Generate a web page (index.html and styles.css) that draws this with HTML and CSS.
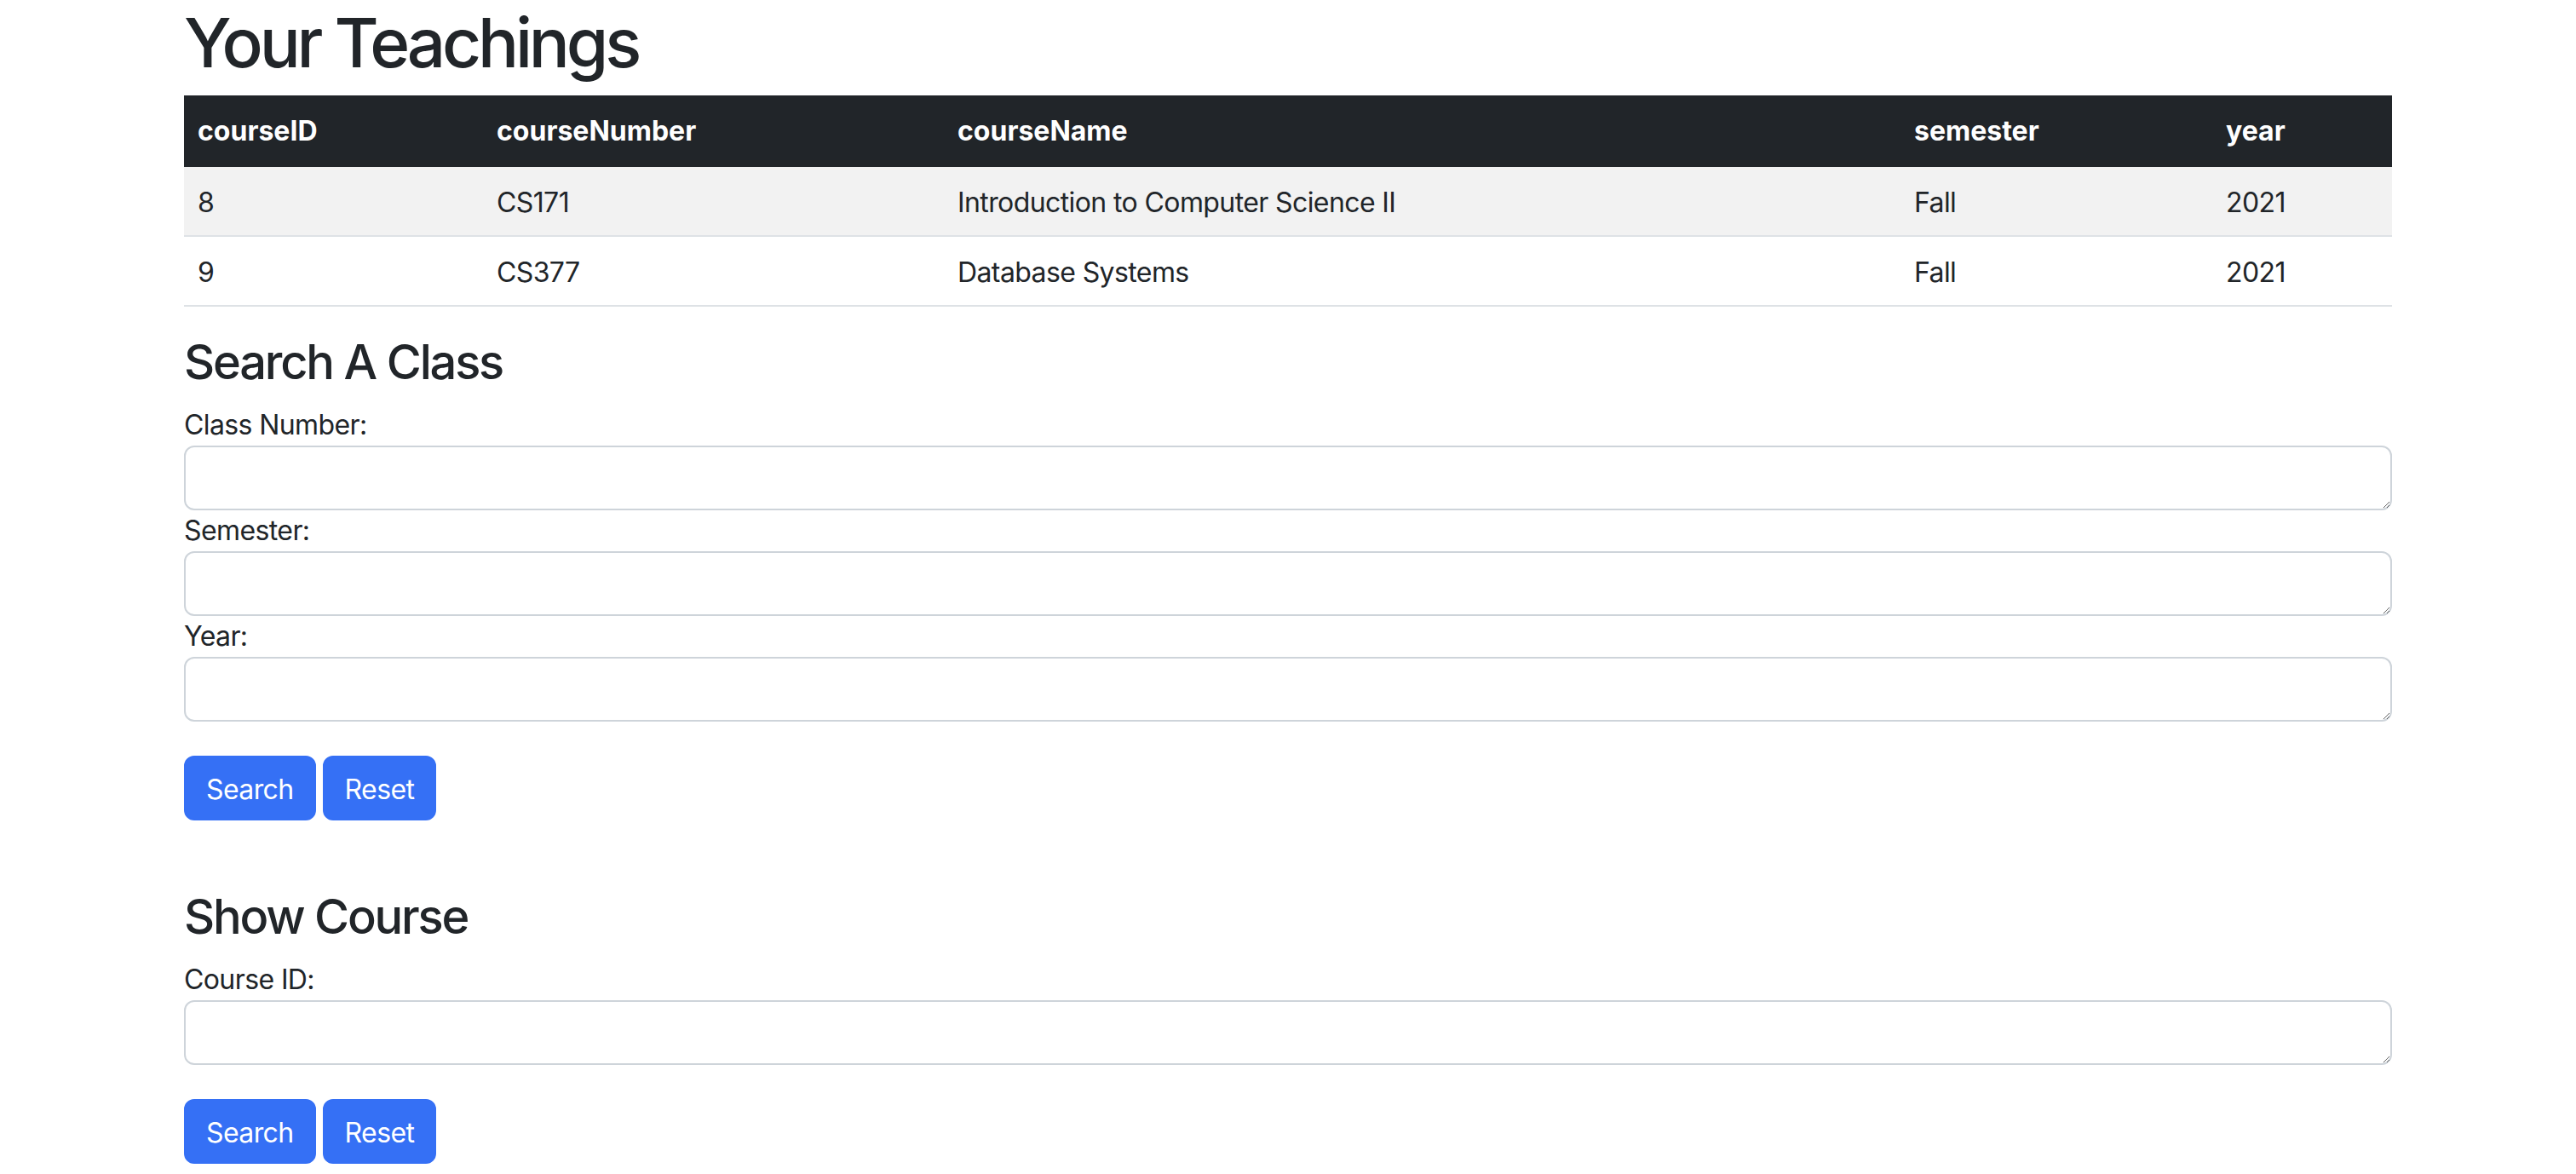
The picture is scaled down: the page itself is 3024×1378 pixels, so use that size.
FILE: index.html
```html
<!DOCTYPE html>
<html lang="en">
<head>
<meta charset="utf-8">
<title>Your Teachings</title>
<link rel="stylesheet" href="styles.css">
</head>
<body>
<div class="container">
  <h1 class="title">Your Teachings</h1>
  <table class="table">
    <colgroup>
      <col class="c-id">
      <col class="c-num">
      <col class="c-name">
      <col class="c-sem">
      <col class="c-year">
    </colgroup>
    <thead>
      <tr>
        <th>courseID</th>
        <th>courseNumber</th>
        <th>courseName</th>
        <th>semester</th>
        <th>year</th>
      </tr>
    </thead>
    <tbody>
      <tr class="striped">
        <td>8</td>
        <td>CS171</td>
        <td>Introduction to Computer Science II</td>
        <td>Fall</td>
        <td>2021</td>
      </tr>
      <tr>
        <td>9</td>
        <td>CS377</td>
        <td>Database Systems</td>
        <td>Fall</td>
        <td>2021</td>
      </tr>
    </tbody>
  </table>

  <form class="search-form">
    <h3 class="section-title">Search A Class</h3>
    <label class="field-label" for="classNumber">Class Number:</label>
    <textarea class="form-control" id="classNumber" rows="1"></textarea>
    <label class="field-label" for="semester">Semester:</label>
    <textarea class="form-control" id="semester" rows="1"></textarea>
    <label class="field-label" for="year">Year:</label>
    <textarea class="form-control" id="year" rows="1"></textarea>
    <div class="actions">
      <button type="button" class="btn">Search</button>
      <button type="reset" class="btn">Reset</button>
    </div>
  </form>

  <form class="search-form second">
    <h3 class="section-title">Show Course</h3>
    <label class="field-label" for="courseId">Course ID:</label>
    <textarea class="form-control" id="courseId" rows="1"></textarea>
    <div class="actions">
      <button type="button" class="btn">Search</button>
      <button type="reset" class="btn">Reset</button>
    </div>
  </form>
</div>
</body>
</html>
```
FILE: styles.css
```css
* {
  box-sizing: border-box;
}

html, body {
  margin: 0;
  padding: 0;
  background: #ffffff;
}

body {
  font-family: Inter, "Liberation Sans", sans-serif;
  font-size: 32px;
  line-height: 48px;
  color: #212529;
}

.container {
  width: 2592px;
  margin: 0 auto;
}

.title {
  margin: 0 0 16px 0;
  padding-top: 2px;
  height: 96px;
  font-size: 80px;
  line-height: 96px;
  font-weight: 500;
  letter-spacing: -4.2px;
}

.table {
  width: 100%;
  border-collapse: collapse;
  table-layout: fixed;
  margin: 0 0 32px 0;
}

.c-id { width: 351px; }
.c-num { width: 541px; }
.c-name { width: 1123px; }
.c-sem { width: 366px; }
.c-year { width: 211px; }

.table th {
  background: #212529;
  color: #ffffff;
  font-weight: 700;
  text-align: left;
  padding: 18px 16px 14px 16px;
  line-height: 48px;
  border-bottom: 4px solid #212529;
}

.table td {
  padding: 18px 16px 14px 16px;
  line-height: 48px;
  letter-spacing: -0.6px;
  border-bottom: 2px solid #dee2e6;
}

.table tr.striped td {
  background: #f2f2f2;
}

.section-title {
  margin: 0 0 16px 0;
  font-size: 56px;
  line-height: 67px;
  font-weight: 500;
  letter-spacing: -2.2px;
}

.field-label {
  display: inline-block;
  font-size: 32px;
  line-height: 48px;
  letter-spacing: -0.6px;
}

.form-control {
  display: block;
  width: 100%;
  height: 76px;
  min-height: 76px;
  padding: 12px 24px;
  font-family: inherit;
  font-size: 32px;
  line-height: 48px;
  color: #212529;
  background: #ffffff;
  border: 2px solid #ced4da;
  border-radius: 12px;
  resize: vertical;
  margin: 0;
}

.actions {
  display: flex;
  gap: 8px;
  margin-top: 40px;
}

.btn {
  font-family: inherit;
  font-size: 32px;
  line-height: 48px;
  letter-spacing: -0.6px;
  padding: 14px 24px 10px 24px;
  color: #ffffff;
  background: #3570f5;
  border: 2px solid #3570f5;
  border-radius: 12px;
  cursor: pointer;
}

.search-form.second {
  margin-top: 80px;
}
```
